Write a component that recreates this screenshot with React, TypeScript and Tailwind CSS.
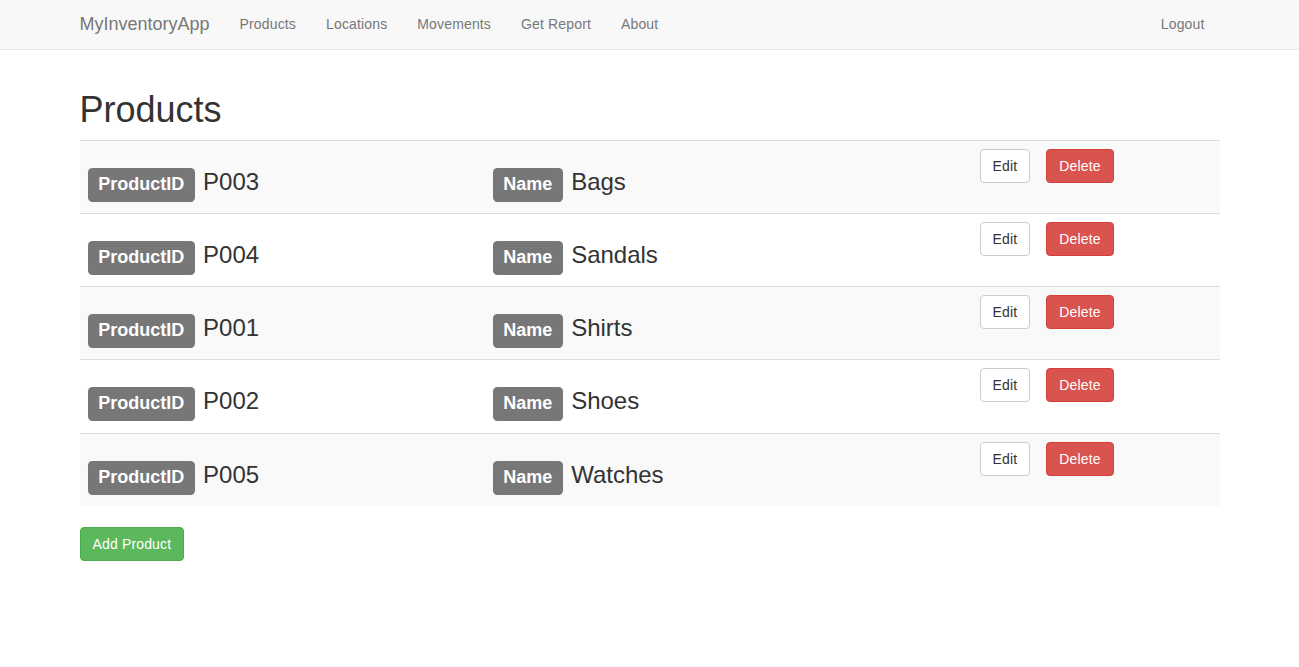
const products = [
  { id: 'P003', name: 'Bags' },
  { id: 'P004', name: 'Sandals' },
  { id: 'P001', name: 'Shirts' },
  { id: 'P002', name: 'Shoes' },
  { id: 'P005', name: 'Watches' },
];

const navLinks = ['Products', 'Locations', 'Movements', 'Get Report', 'About'];

function Label({ children }: { children: React.ReactNode }) {
  return (
    <span className="inline-block rounded-[4.5px] bg-[#777777] px-[10.8px] pt-[7px] pb-[9px] text-[18px] leading-[18px] font-bold text-white">
      {children}
    </span>
  );
}

export default function App() {
  return (
    <div className="min-h-[667px] bg-white font-['Liberation_Sans',Arial,sans-serif] text-[14px] text-[#333333]">
      <nav className="h-[50px] border-b border-[#e7e7e7] bg-[#f8f8f8]">
        <div className="mx-auto flex h-full w-[1140px] items-center pb-[1px]">
          <a className="pr-[15px] text-[18px] leading-[20px] text-[#777777]">MyInventoryApp</a>
          {navLinks.map((link) => (
            <a key={link} className="px-[15px] leading-[20px] tracking-[0.15px] text-[#777777]">
              {link}
            </a>
          ))}
          <a className="ml-auto px-[15px] leading-[20px] tracking-[0.15px] text-[#777777]">Logout</a>
        </div>
      </nav>

      <div className="mx-auto w-[1140px] pt-[20px]">
        <h1 className="mt-[20px] mb-[10px] text-[36px] leading-[39.6px] font-normal">Products</h1>

        <div className="mb-[21px]">
          {products.map((p, i) => (
            <div
              key={p.id}
              className={`grid h-[73.3px] grid-cols-[405px_487px_248px] border-t border-[#dddddd] ${
                i % 2 === 0 ? 'bg-[#f9f9f9]' : 'bg-white'
              }`}
            >
              <div className="flex items-baseline px-[8px] pt-[27px]">
                <Label>ProductID</Label>
                <span className="ml-[8px] text-[24px] leading-[26.4px]">{p.id}</span>
              </div>
              <div className="flex items-baseline px-[8px] pt-[27px]">
                <Label>Name</Label>
                <span className="ml-[8px] text-[24px] leading-[26.4px]">{p.name}</span>
              </div>
              <div className="flex items-start gap-[16px] px-[8px] pt-[8px]">
                <button className="rounded-[4px] border border-[#cccccc] bg-white px-[12px] py-[6px] leading-[20px] tracking-[0.15px] text-[#333333]">
                  Edit
                </button>
                <button className="rounded-[4px] border border-[#d43f3a] bg-[#d9534f] px-[12px] py-[6px] leading-[20px] tracking-[0.15px] text-white">
                  Delete
                </button>
              </div>
            </div>
          ))}
        </div>

        <button className="rounded-[4px] border border-[#4cae4c] bg-[#5cb85c] px-[12px] py-[6px] leading-[20px] tracking-[0.15px] text-white">
          Add Product
        </button>
      </div>
    </div>
  );
}
